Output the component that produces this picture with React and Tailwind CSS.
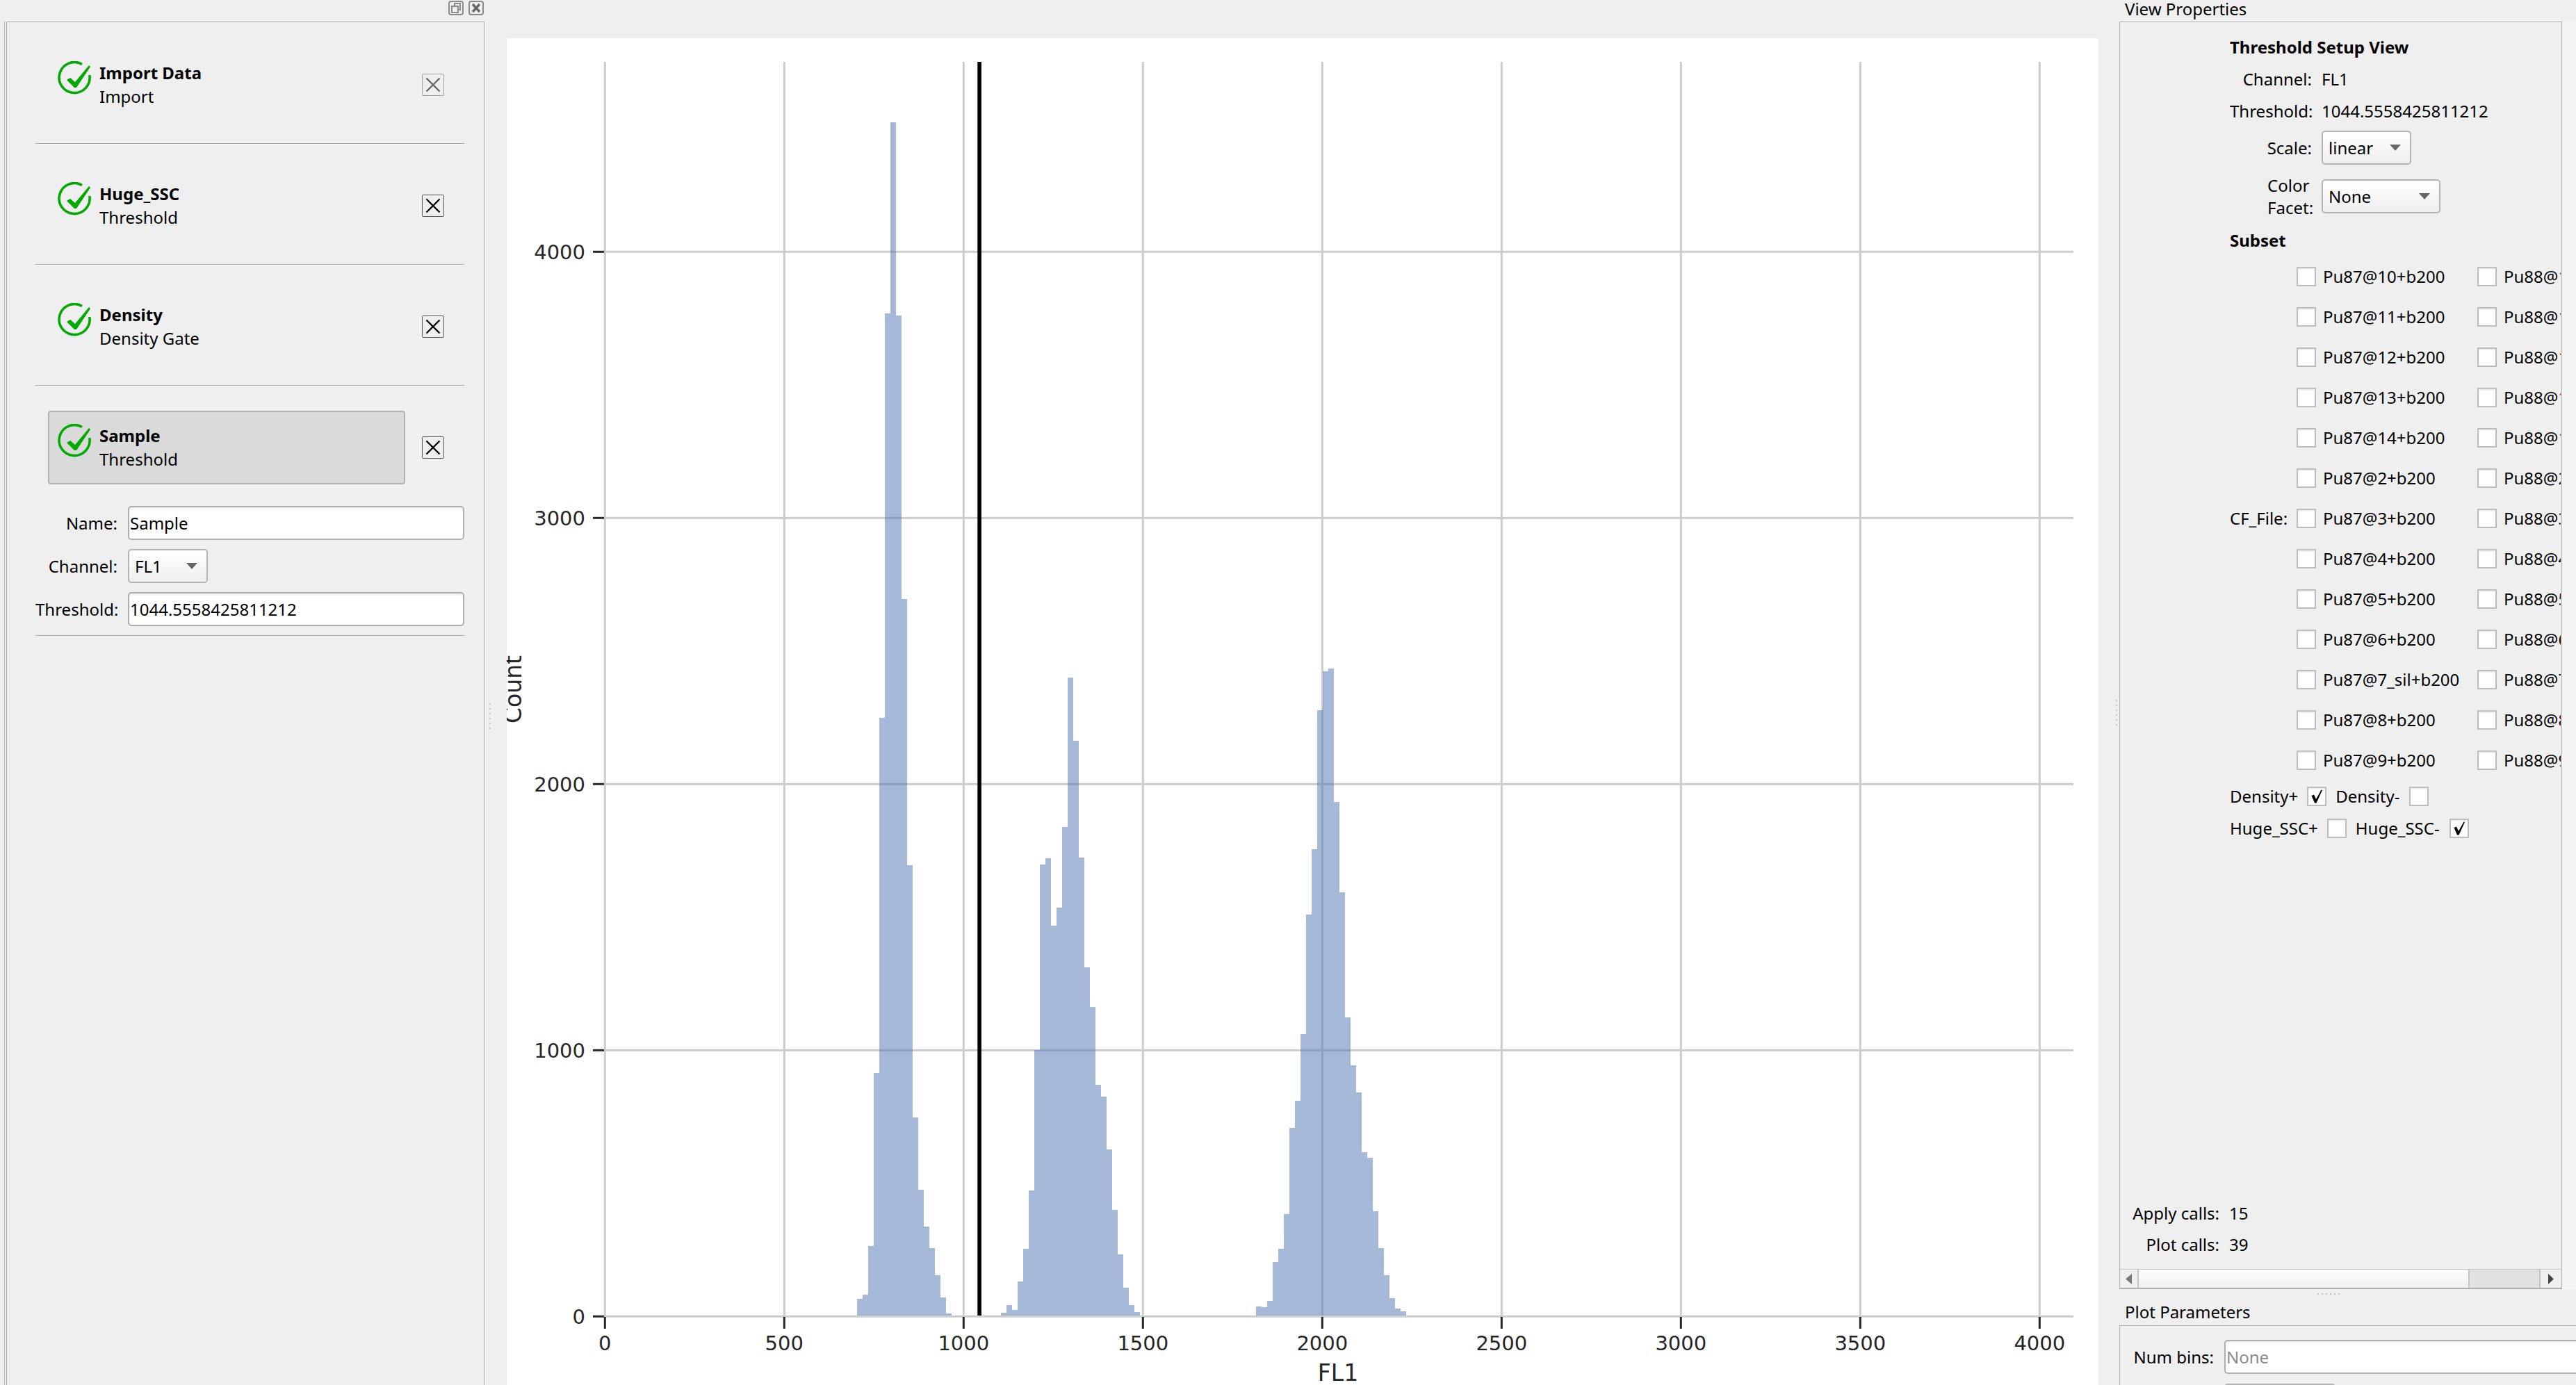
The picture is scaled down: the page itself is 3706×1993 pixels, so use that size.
import React from 'react';

const clusters = [
  { x: 1233, tops: [1869, 1863, 1793, 1544, 1033, 451, 176, 454, 862, 1245, 1608, 1712, 1765, 1796, 1835, 1867, 1890] },
  { x: 1440, tops: [1889, 1878, 1885, 1844, 1797, 1713, 1511, 1244, 1235, 1332, 1306, 1190, 975, 1066, 1234, 1392, 1449, 1561, 1578, 1654, 1741, 1805, 1853, 1878, 1888] },
  { x: 1807, tops: [1880, 1881, 1872, 1816, 1797, 1747, 1623, 1584, 1488, 1316, 1222, 1022, 966, 962, 1154, 1284, 1464, 1533, 1572, 1658, 1666, 1743, 1796, 1835, 1868, 1883, 1887] },
];

const xTicks = [0, 500, 1000, 1500, 2000, 2500, 3000, 3500, 4000];
const yTicks = [0, 1000, 2000, 3000, 4000];
const xPos = (v) => 870.3 + v * 0.516;
const yPos = (v) => 1894.3 - v * 0.383;

const subsets = ['10', '11', '12', '13', '14', '2', '3', '4', '5', '6', '7_sil', '8', '9'];

function Chart() {
  return (
    <svg width="2290" height="1938" className="block">
      <g transform="translate(-729 -55)">
        {xTicks.map((v) => (
          <rect key={v} x={xPos(v) - 1.5} y="89" width="3" height="1805" fill="#cccccc" />
        ))}
        {yTicks.map((v) => (
          <rect key={v} x="870" y={yPos(v) - 1.5} width="2113" height="3" fill="#cccccc" />
        ))}
        {clusters.map((c) =>
          c.tops.map((top, i) => (
            <rect key={c.x + i} x={c.x + i * 8} y={top} width="8" height={1893 - top} fill="#4c72b0" fillOpacity="0.5" />
          ))
        )}
        <rect x="1406.3" y="89" width="5.6" height="1804" fill="#000000" />
        {xTicks.map((v) => (
          <g key={v}>
            <rect x={xPos(v) - 1.5} y="1895" width="3" height="17" fill="#262626" />
            <text x={xPos(v)} y="1943" textAnchor="middle" fontFamily="DejaVu Sans" fontSize="29" fill="#262626">{v}</text>
          </g>
        ))}
        {yTicks.map((v) => (
          <g key={v}>
            <rect x="853" y={yPos(v) - 1.5} width="16" height="3" fill="#262626" />
            <text x="842" y={yPos(v) + 10.5} textAnchor="end" fontFamily="DejaVu Sans" fontSize="29" fill="#262626">{v}</text>
          </g>
        ))}
        <text x="1925" y="1987" textAnchor="middle" fontFamily="DejaVu Sans" fontSize="33" fill="#262626">FL1</text>
        <text transform="translate(750 992) rotate(-90)" textAnchor="middle" fontFamily="DejaVu Sans" fontSize="33" fill="#262626">Count</text>
      </g>
    </svg>
  );
}

function CheckIcon() {
  return (
    <svg width="48" height="48" viewBox="0 0 48 48" className="shrink-0">
      <path d="M35 4.5 A22 22 0 1 0 45.8 20" fill="none" stroke="#00aa00" strokeWidth="3.6" />
      <path d="M13 27 L18 24 L25 30 L45 6 L47 8 L27 38 L24 38 Z" fill="#00aa00" />
    </svg>
  );
}

function RemoveButton({ disabled }) {
  const color = disabled ? '#666666' : '#000000';
  return (
    <div className={`w-[32px] h-[32px] rounded-[2px] border flex items-center justify-center ${disabled ? 'border-[#a0a0a0]' : 'border-[#555555]'}`}>
      <svg width="24" height="24" viewBox="0 0 24 24">
        <path d="M2.5 2.5 L21.5 21.5 M21.5 2.5 L2.5 21.5" stroke={color} strokeWidth="2.4" fill="none" />
      </svg>
    </div>
  );
}

function TaskRow({ title, kind, disabled, selected, last }) {
  return (
    <div className={`ml-[41px] mr-[28px] flex items-center pt-[5px] ${last ? 'h-[173px]' : 'h-[174px] border-b border-[#a8a8a8] shadow-[0_1px_0_#ffffff]'}`}>
      <div className={`ml-[18px] w-[514px] h-[106px] rounded-[4px] border-2 pl-[12px] pt-[17px] flex gap-[12px] ${selected ? 'bg-[#dadada] border-[#b0b0b0]' : 'border-transparent'}`}>
        <CheckIcon />
        <div className="leading-[34px] whitespace-nowrap">
          <div className="font-bold">{title}</div>
          <div>{kind}</div>
        </div>
      </div>
      <div className="ml-[24px]">
        <RemoveButton disabled={disabled} />
      </div>
    </div>
  );
}

function Combo({ value, width }) {
  return (
    <div style={{ width }} className="h-[49px] rounded-[5px] border-2 border-[#b4b4b4] bg-gradient-to-b from-[#ffffff] to-[#efefef] flex items-center justify-between pl-[8px] pr-[13px]">
      <span>{value}</span>
      <svg width="16" height="9" viewBox="0 0 16 9">
        <path d="M0 0 H16 L8 9 Z" fill="#666666" />
      </svg>
    </div>
  );
}

function TextInput({ value, muted, className }) {
  return (
    <div className={`h-[49px] rounded-[5px] border-2 border-[#aeaeae] bg-white shadow-[inset_0_3px_0_#f2f2f2] flex items-center pl-[1px] whitespace-nowrap ${muted ? 'text-[#8c8c8c]' : ''} ${className}`}>
      {value}
    </div>
  );
}

function Checkbox({ checked }) {
  return (
    <div className="w-[28px] h-[28px] shrink-0 border-2 border-[#bdbdbd] bg-white shadow-[inset_0_2px_0_#f0f0f0] flex items-center justify-center">
      {checked && (
        <svg width="18" height="20" viewBox="0 0 18 20">
          <path d="M1.5 9 L5 7.5 L8 14 L15.5 0.5 L17 1 L8.5 19.5 L6 19.5 Z" fill="#000000" />
        </svg>
      )}
    </div>
  );
}

function VDots() {
  return (
    <div className="flex flex-col gap-[5px]">
      {[0, 1, 2, 3, 4, 5].map((i) => (
        <span key={i} className="w-[2px] h-[2px] bg-[#c4c4c4]" />
      ))}
    </div>
  );
}

function HDots() {
  return (
    <div className="flex gap-[4px]">
      {[0, 1, 2, 3, 4, 5].map((i) => (
        <span key={i} className="w-[2px] h-[2px] bg-[#bcbcbc]" />
      ))}
    </div>
  );
}

function LeftPanel() {
  return (
    <div className="w-[729px] shrink-0 flex">
      <div className="w-[697px] shrink-0 flex flex-col">
        <div className="h-[31px] shrink-0 flex justify-end gap-[7px] pt-[1px] pr-[1px]">
          <svg width="22" height="21" viewBox="0 0 22 21">
            <rect x="1" y="1" width="20" height="19" rx="3" fill="none" stroke="#8a8a8a" strokeWidth="2" />
            <rect x="5" y="8" width="9" height="9" fill="none" stroke="#8a8a8a" strokeWidth="2" />
            <path d="M9 8 V4 H17 V13 H14" fill="none" stroke="#8a8a8a" strokeWidth="2" />
          </svg>
          <svg width="22" height="21" viewBox="0 0 22 21">
            <rect x="1" y="1" width="20" height="19" rx="3" fill="none" stroke="#8a8a8a" strokeWidth="2" />
            <path d="M6 5 L16 16 M16 5 L6 16" stroke="#666666" strokeWidth="3.4" fill="none" />
          </svg>
        </div>
        <div className="flex-1 ml-[6px] border-l border-[#b4b4b4] pl-[2px]">
          <div className="h-full border-l border-t border-r border-[#aaaaaa] pt-[1px]">
            <TaskRow title="Import Data" kind="Import" disabled />
            <TaskRow title="Huge_SSC" kind="Threshold" />
            <TaskRow title="Density" kind="Density Gate" />
            <TaskRow title="Sample" kind="Threshold" selected last />
            <div className="ml-[41px] mr-[28px] border-b border-[#a8a8a8] pb-[13px] flex flex-col gap-[13px]">
              <div className="flex items-center gap-[15px]">
                <span className="w-[118px] text-right">Name:</span>
                <TextInput value="Sample" className="w-[484px]" />
              </div>
              <div className="flex items-center gap-[15px]">
                <span className="w-[118px] text-right">Channel:</span>
                <Combo value="FL1" width={115} />
              </div>
              <div className="flex items-center gap-[15px]">
                <span className="w-[118px] text-right">Threshold:</span>
                <TextInput value="1044.5558425811212" className="w-[484px]" />
              </div>
            </div>
          </div>
        </div>
      </div>
      <div className="pt-[1012px] pl-[7px]">
        <VDots />
      </div>
    </div>
  );
}

function Scrollbar() {
  return (
    <div className="h-[27px] shrink-0 border-t border-[#c4c4c4] flex">
      <div className="w-[27px] border-r-2 border-[#c4c4c4] flex items-center justify-center">
        <svg width="9" height="15" viewBox="0 0 9 15"><path d="M9 0 V15 L0 7.5 Z" fill="#777777" /></svg>
      </div>
      <div className="w-[474px] bg-gradient-to-b from-[#ffffff] to-[#f0f0f0]" />
      <div className="w-[104px] bg-[#e2e2e2] border-x-2 border-[#c4c4c4]" />
      <div className="flex-1 flex items-center justify-center">
        <svg width="8" height="15" viewBox="0 0 8 15"><path d="M0 0 V15 L8 7.5 Z" fill="#444444" /></svg>
      </div>
    </div>
  );
}

function RightPanel() {
  return (
    <div className="flex-1 min-w-0 flex flex-col">
      <div className="h-[31px] shrink-0 pl-[8px] leading-[26px]">View Properties</div>
      <div className="h-[1824px] shrink-0 flex">
        <div className="w-[637px] shrink-0 border border-b-2 border-[#b0b0b0] flex flex-col">
          <div className="flex-1 min-h-0 mr-[1px] overflow-hidden flex flex-col pl-[158px]">
            <div className="mt-[19px] h-[34px] leading-[34px] font-bold">Threshold Setup View</div>
            <div className="mt-[12px] h-[34px] flex items-center gap-[14px]">
              <span className="w-[118px] text-right">Channel:</span>
              <span>FL1</span>
            </div>
            <div className="mt-[12px] h-[34px] flex items-center gap-[14px]">
              <span className="w-[118px] text-right">Threshold:</span>
              <span>1044.5558425811212</span>
            </div>
            <div className="mt-[11px] flex items-center gap-[14px]">
              <span className="w-[118px] text-right">Scale:</span>
              <Combo value="linear" width={129} />
            </div>
            <div className="mt-[21px] flex items-center gap-[14px]">
              <span className="w-[118px] h-[49px] pl-[54px] leading-[32px] flex items-center">Color Facet:</span>
              <Combo value="None" width={171} />
            </div>
            <div className="mt-[22px] h-[34px] leading-[34px] font-bold">Subset</div>
            <div className="mt-[6px] flex items-center">
              <span className="w-[96px] shrink-0">CF_File:</span>
              <div className="grid grid-cols-[260px_260px] auto-rows-[58px]">
                {subsets.map((s) => (
                  <React.Fragment key={s}>
                    <div className="flex items-center gap-[10px] whitespace-nowrap">
                      <Checkbox />
                      <span>{`Pu87@${s}+b200`}</span>
                    </div>
                    <div className="flex items-center gap-[10px] whitespace-nowrap">
                      <Checkbox />
                      <span>{`Pu88@${s}+b200`}</span>
                    </div>
                  </React.Fragment>
                ))}
              </div>
            </div>
            <div className="mt-[6px] h-[34px] flex items-center">
              <span>Density+</span>
              <span className="ml-[13px]"><Checkbox checked /></span>
              <span className="ml-[13px]">Density-</span>
              <span className="ml-[14px]"><Checkbox /></span>
            </div>
            <div className="mt-[12px] h-[34px] flex items-center">
              <span>Huge_SSC+</span>
              <span className="ml-[13px]"><Checkbox /></span>
              <span className="ml-[13px]">Huge_SSC-</span>
              <span className="ml-[14px]"><Checkbox checked /></span>
            </div>
            <div className="mt-auto -ml-[158px] pb-[18px] flex flex-col gap-[11px]">
              <div className="h-[34px] flex items-center gap-[14px]">
                <span className="w-[143px] text-right">Apply calls:</span>
                <span>15</span>
              </div>
              <div className="h-[34px] flex items-center gap-[14px]">
                <span className="w-[143px] text-right">Plot calls:</span>
                <span>39</span>
              </div>
            </div>
          </div>
          <Scrollbar />
        </div>
        <div className="flex-1 bg-[#f4f4f4]" />
      </div>
      <div className="h-[15px] shrink-0 flex justify-center pt-[6px] pr-[55px]">
        <HDots />
      </div>
      <div className="h-[37px] shrink-0 pl-[8px] leading-[36px]">Plot Parameters</div>
      <div className="flex-1 border-l border-t border-[#b0b0b0] overflow-hidden pt-[20px] pl-[150px]">
        <div className="flex items-center gap-[15px]">
          <span className="-ml-[150px] w-[135px] text-right shrink-0">Num bins:</span>
          <TextInput value="None" muted className="w-[520px] shrink-0" />
        </div>
        <div className="mt-[14px] w-[160px] h-[49px] rounded-[5px] border-2 border-[#b4b4b4] bg-gradient-to-b from-[#ffffff] to-[#efefef]" />
      </div>
    </div>
  );
}

export default function App() {
  return (
    <div className="w-[3706px] h-[1993px] overflow-hidden flex bg-[#efefef] text-black text-[24px] font-['Noto_Sans',sans-serif]">
      <LeftPanel />
      <div className="w-[2290px] shrink-0 pt-[55px]">
        <div className="bg-white h-full overflow-hidden">
          <Chart />
        </div>
      </div>
      <div className="w-[30px] shrink-0 pt-[1007px] pl-[25px]">
        <VDots />
      </div>
      <RightPanel />
    </div>
  );
}
